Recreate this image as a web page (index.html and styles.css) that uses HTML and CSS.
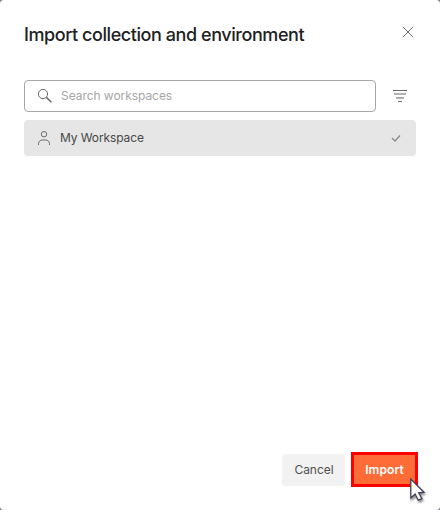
FILE: index.html
```html
<!DOCTYPE html>
<html lang="en">
<head>
<meta charset="utf-8">
<title>Import collection and environment</title>
<link rel="stylesheet" href="styles.css">
</head>
<body>
<main class="modal">
  <header class="header">
    <h1 class="title">Import collection and environment</h1>
    <svg class="close" width="16" height="16" viewBox="0 0 16 16"><path d="M3 3l10 10M13 3L3 13"/></svg>
  </header>
  <div class="filters">
    <div class="search">
      <svg width="16" height="16" viewBox="0 0 16 16"><circle cx="6" cy="6" r="4.6"/><path d="M9.4 9.4l5 4.8" stroke-width="1.5"/></svg>
      <span class="placeholder">Search workspaces</span>
    </div>
    <svg class="filter" width="16" height="16" viewBox="0 0 16 16"><path d="M1 2.5h14M6 13.5h4" stroke="#6b6b6b"/><path d="M2 6h12M4 10h8" stroke="#b0b0b0" stroke-width="2"/></svg>
  </div>
  <div class="workspace">
    <svg width="16" height="16" viewBox="0 0 16 16"><circle cx="8" cy="4.2" r="2.7"/><path d="M2.5 15v-1.2C2.5 11.5 4.3 10 6.2 10h3.6c1.9 0 3.7 1.5 3.7 3.8V15"/></svg>
    <span class="name">My Workspace</span>
    <svg class="check" width="16" height="16" viewBox="0 0 16 16"><path d="M4 8l3 3 5-5.5"/></svg>
  </div>
  <footer class="footer">
    <button class="btn cancel">Cancel</button>
    <button class="btn import">Import</button>
  </footer>
</main>
<svg class="cursor" width="20" height="28" viewBox="0 0 20 28"><path d="M1.8 2v19l4.3-4 3.3 6.2 3.5-1.6-3.2-5.8 5.3-.6z"/></svg>
</body>
</html>
```
FILE: styles.css
```css
body {
  margin: 0;
  background: #7b8084;
  font-family: Inter, "Liberation Sans", sans-serif;
  font-size: 12px;
  color: #212121;
}

svg {
  flex: none;
  fill: none;
  stroke: #6b6b6b;
}

.modal {
  box-sizing: border-box;
  width: 440px;
  height: 510px;
  padding: 24px;
  display: flex;
  flex-direction: column;
  background: #fff;
  border-radius: 4px;
}

.header {
  display: flex;
  justify-content: space-between;
  height: 56px;
}

.title {
  margin: 0;
  font-size: 18px;
  line-height: 22px;
  font-weight: 500;
  letter-spacing: -0.43px;
  white-space: nowrap;
}

.filters {
  display: flex;
  align-items: center;
  gap: 16px;
  padding-right: 8px;
}

.search {
  box-sizing: border-box;
  flex: 1;
  height: 32px;
  padding: 0 12px;
  display: flex;
  align-items: center;
  gap: 8px;
  border: 1px solid #a6a6a6;
  border-radius: 4px;
}

.placeholder {
  padding-bottom: 2px;
  color: #a6a6a6;
  letter-spacing: -0.05px;
}

.workspace {
  display: flex;
  align-items: center;
  gap: 8px;
  height: 36px;
  margin-top: 8px;
  padding: 0 12px;
  background: #e6e6e6;
  border-radius: 4px;
}

.name {
  flex: 1;
  padding-bottom: 2px;
  color: #484848;
  letter-spacing: -0.1px;
}

.check {
  stroke: #8a8a8a;
  stroke-width: 1.3;
}

.footer {
  display: flex;
  justify-content: flex-end;
  gap: 6px;
  margin: auto -2px -1px 0;
}

.btn {
  box-sizing: border-box;
  height: 32px;
  padding: 0;
  border: 0;
  border-radius: 4px;
  font: inherit;
}

.cancel {
  width: 63px;
  margin-top: 2px;
  padding: 0 0 2px 1px;
  background: #f2f2f2;
  color: #505050;
  letter-spacing: -0.05px;
}

.import {
  width: 67px;
  height: 35px;
  border: 3px solid #f00;
  border-radius: 0;
  background: #ff6c37;
  color: #fff;
  font-weight: 600;
  letter-spacing: 0.08px;
}

.cursor {
  position: absolute;
  left: 409px;
  top: 477px;
  fill: #fff;
  stroke: #40405a;
  stroke-width: 1.3;
  filter: drop-shadow(1px 2px 1px rgba(0, 0, 0, 0.45));
}
```
